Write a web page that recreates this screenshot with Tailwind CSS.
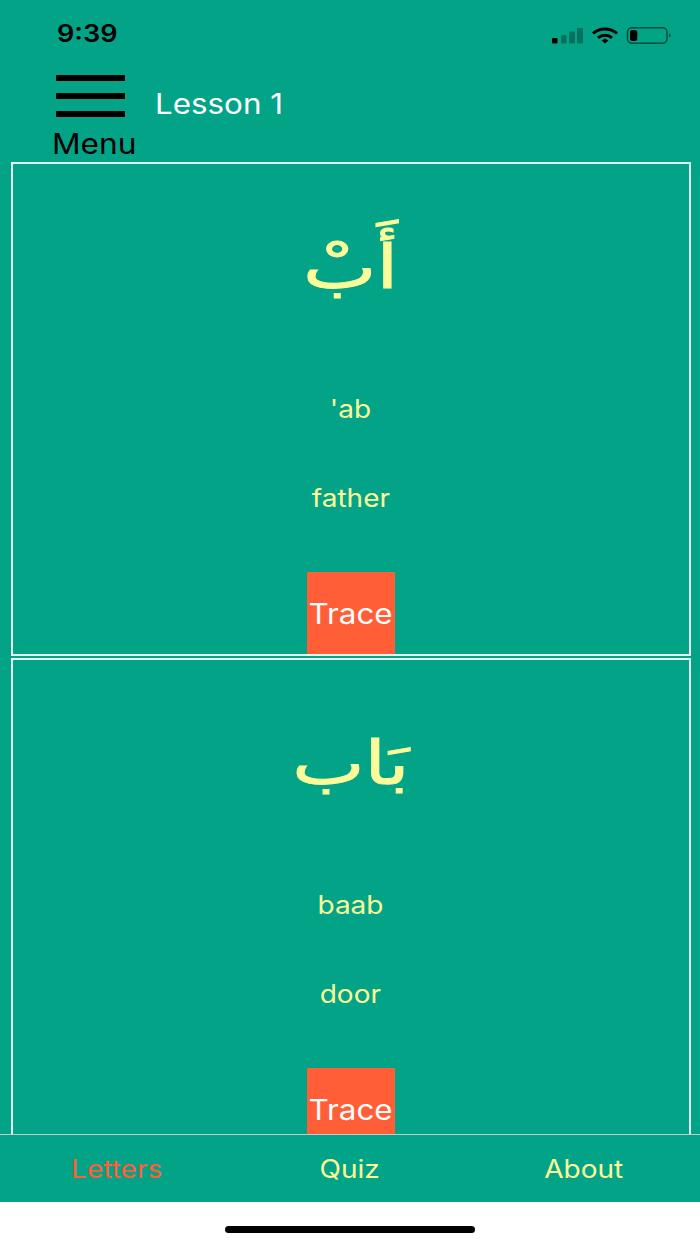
<!DOCTYPE html>
<html lang="en">
<head>
    <meta charset="UTF-8">
    <meta name="viewport" content="width=device-width, initial-scale=1.0">
    <title>Lesson 1</title>
    <script src="https://cdn.jsdelivr.net/npm/@tailwindcss/browser@4"></script>
</head>
<body class="bg-white font-['Inter',sans-serif]">
    <div class="h-[1244px] w-[700px] flex flex-col overflow-hidden">
        <!-- Status bar -->
        <div class="h-[68px] shrink-0 bg-[#03a388] flex items-center justify-between pl-[57px] pr-[29px]">
            <span class="text-[24px] font-semibold text-black leading-none scale-x-[1.13] origin-left">9:39</span>
            <svg width="120" height="24" viewBox="0 0 120 24" class="-mt-[1px]">
                <rect x="1" y="16" width="5.500" height="5.500" rx="1" fill="#000"/>
                <rect x="10" y="13" width="5.500" height="8.500" rx="1" fill="#000" fill-opacity=".3"/>
                <rect x="18" y="9.500" width="6" height="12" rx="1" fill="#000" fill-opacity=".3"/>
                <rect x="26" y="6" width="6" height="15.500" rx="1" fill="#000" fill-opacity=".3"/>
                <path d="M42 11.500a18 18 0 0 1 24 0M47 15.800a10.500 10.500 0 0 1 14 0" fill="none" stroke="#000" stroke-width="3"/>
                <path d="M50.500 18.500 54 16.500l3.500 2-3.500 3z" fill="#000"/>
                <rect x="76.500" y="5.700" width="39.500" height="15.500" rx="4.500" fill="none" stroke="#000" stroke-opacity=".55" stroke-width="1.500"/>
                <rect x="79" y="8" width="7.300" height="11" rx="2.500" fill="#000"/>
                <path d="M118 11v4.700l2-2.300z" fill="#000" fill-opacity=".5"/>
            </svg>
        </div>

        <!-- Header -->
        <div class="h-[94px] shrink-0 bg-[#03a388] flex items-start">
            <div class="w-[155px] shrink-0 pl-[52px] pt-[7px]">
                <div class="ml-[4px] w-[69px] flex flex-col gap-[12px]">
                    <div class="h-[6px] bg-black"></div>
                    <div class="h-[6px] bg-black"></div>
                    <div class="h-[6px] bg-black"></div>
                </div>
                <div class="text-[28px] leading-[34px] text-black mt-[10px] scale-x-[1.13] origin-left">Menu</div>
            </div>
            <div class="text-[28px] leading-[34px] text-white mt-[19px] scale-x-[1.12] origin-left">Lesson 1</div>
        </div>

        <!-- Lesson list -->
        <div class="flex-1 min-h-0 overflow-hidden bg-[#03a388] pl-[11px] pr-[9px] flex flex-col gap-[2px]">
            <div class="h-[494px] shrink-0 border-2 border-white/90 flex flex-col items-center text-[#fbfb99]">
                <div dir="rtl" class="h-[88px] mt-[59px] text-[60px] leading-[88px] font-['DejaVu_Sans',sans-serif] scale-x-[1.3] [-webkit-text-stroke:1px_#fbfb99]">أَبْ</div>
                <div class="mt-[83px] text-[25px] leading-[30px] scale-x-[1.12] -ml-[1px]">'ab</div>
                <div class="mt-[59px] text-[25px] leading-[30px] scale-x-[1.12] -ml-[1px]">father</div>
                <div class="mt-[59px] w-[88px] h-[82px] bg-[#ff5e36] text-white text-[28px] flex items-center justify-center pt-[2px]"><span class="scale-x-[1.12] -ml-[1px]">Trace</span></div>
            </div>
            <div class="h-[494px] shrink-0 border-2 border-white/90 flex flex-col items-center text-[#fbfb99]">
                <div dir="rtl" class="h-[88px] mt-[59px] text-[60px] leading-[88px] font-['DejaVu_Sans',sans-serif] scale-x-[1.28] [-webkit-text-stroke:1px_#fbfb99]">بَاب</div>
                <div class="mt-[83px] text-[25px] leading-[30px] scale-x-[1.12] -ml-[1px]">baab</div>
                <div class="mt-[59px] text-[25px] leading-[30px] scale-x-[1.12] -ml-[1px]">door</div>
                <div class="mt-[59px] w-[88px] h-[82px] bg-[#ff5e36] text-white text-[28px] flex items-center justify-center pt-[2px]"><span class="scale-x-[1.12] -ml-[1px]">Trace</span></div>
            </div>
        </div>

        <!-- Tab bar -->
        <div class="h-[68px] shrink-0 bg-[#03a388] border-t border-[#c8c8c8] pt-[2px] grid grid-cols-3 items-center text-center text-[25px] text-[#fbfb99]">
            <span class="text-[#ff5e36] scale-x-[1.12]">Letters</span>
            <span class="scale-x-[1.12]">Quiz</span>
            <span class="scale-x-[1.12]">About</span>
        </div>

        <!-- Home indicator -->
        <div class="h-[42px] shrink-0 bg-white flex justify-center pt-[24px]">
            <div class="w-[250px] h-[7px] rounded-full bg-black"></div>
        </div>
    </div>
</body>
</html>
